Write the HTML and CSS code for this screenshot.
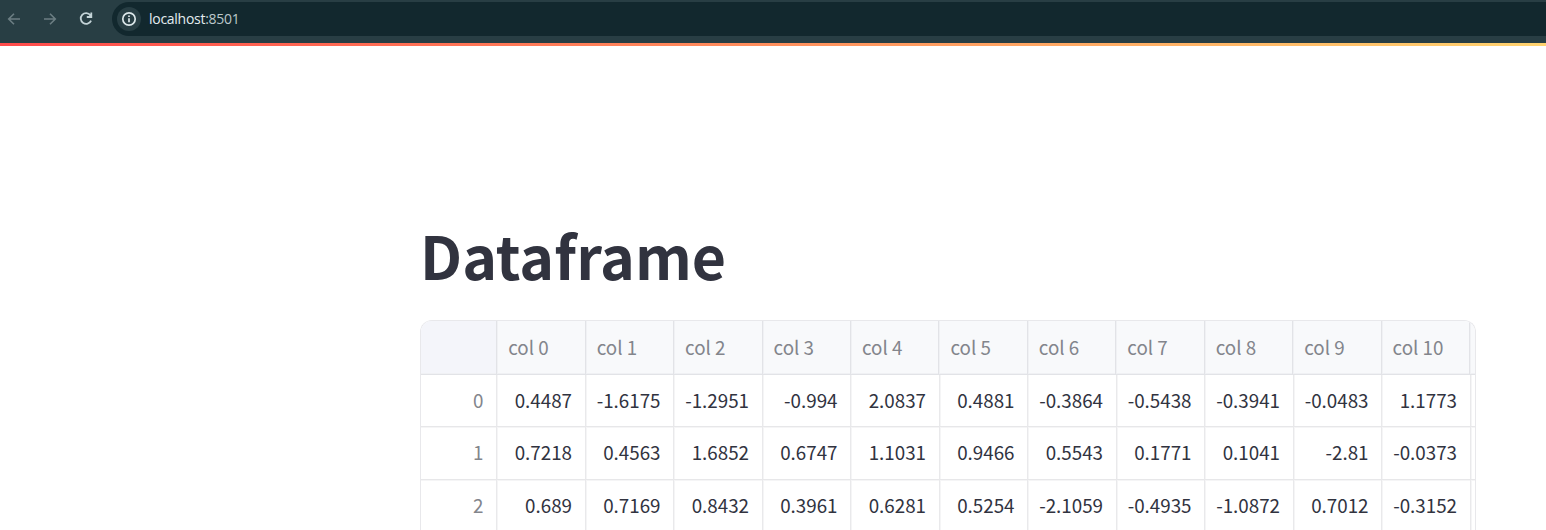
FILE: index.html
```
<!DOCTYPE html>
<html lang="en">
<head>
<meta charset="utf-8">
<title>Dataframe</title>
<link rel="stylesheet" href="styles.css">
</head>
<body>
<header class="toolbar">
  <svg class="nav-icon back" viewBox="0 0 16 16"><path d="M14 8H3M8 2.7L2.7 8L8 13.3"/></svg>
  <svg class="nav-icon forward" viewBox="0 0 16 16"><path d="M2 8H13M8 2.7L13.3 8L8 13.3"/></svg>
  <svg class="nav-icon reload" viewBox="0 0 16 16"><path d="M12.4 4.2A5.4 5.4 0 1 0 13.1 9.7M13.3 1.6V6H8.8"/><path class="tip" d="M13.3 2.6V6H9.9Z"/></svg>
  <div class="address">
    <span class="info"><svg viewBox="0 0 16 16"><circle cx="8" cy="8" r="6.2"/><path d="M8 7.3V11.3M8 4.6V6.1"/></svg></span>
    <span class="url">localhost<span class="port">:8501</span></span>
  </div>
</header>
<div class="decoration"></div>
<main class="page">
  <h1 class="title">Dataframe</h1>
  <div class="frame">
    <div class="row head"></div>
    <div class="row"></div>
    <div class="row"></div>
    <div class="row last"></div>
  </div>
</main>
<script src="table.js"></script>
</body>
</html>
```
FILE: styles.css
```
* { box-sizing: border-box; }
body {
  margin: 0;
  height: 530px;
  overflow: hidden;
  background: #fff;
  font-family: "Noto Sans CJK SC", sans-serif;
  color: #31333f;
}
.toolbar {
  display: flex;
  height: 43px;
  padding: 2px 0 7px 6px;
  background: #283e44;
}
.nav-icon {
  width: 16px;
  height: 16px;
  margin: 9px 20px 0 0;
  fill: none;
  stroke: #6c7e83;
  stroke-width: 1.6;
}
.reload { stroke: #c3d3d7; stroke-width: 1.8; margin-right: 18px; }
.tip { fill: #c3d3d7; stroke: none; }
.address {
  display: flex;
  align-items: center;
  flex: 1;
  height: 34px;
  padding-left: 5px;
  border-radius: 17px 0 0 17px;
  background: #12282e;
}
.info {
  display: flex;
  align-items: center;
  justify-content: center;
  width: 24px;
  height: 24px;
  margin-right: 8px;
  border-radius: 50%;
  background: #283e44;
}
.info svg { width: 16px; height: 16px; fill: none; stroke: #dce7ea; stroke-width: 1.7; }
.url {
  font: 14px/20px "Open Sans", sans-serif;
  letter-spacing: -0.28px;
  color: #e3edef;
}
.port { color: #bcc8cb; }
.decoration { height: 3px; background: linear-gradient(90deg, #ff4b4b, #ffd36f); }
.page { width: 1056px; margin-left: 420px; padding-top: 169px; }
.title {
  margin: 0;
  height: 80px;
  font-size: 59px;
  line-height: 80px;
  font-weight: 700;
}
.frame {
  height: 210px;
  margin-top: 25px;
  border: 1px solid #e8e8eb;
  border-bottom: 0;
  border-radius: 12px 12px 0 0;
  overflow: hidden;
}
.row {
  display: grid;
  grid-template-columns: 76px repeat(12, 88.5px);
  height: 52.5px;
  font-size: 18.8px;
  line-height: 49px;
}
.head {
  grid-template-columns: 76.2px repeat(12, 88.44px);
  height: 53.5px;
  background: #f8f9fb;
  color: #83858c;
  line-height: 51px;
}
.last { height: 50px; }
.cell {
  border-right: 1px solid #e9e9eb;
  border-bottom: 1px solid #e7e7e9;
  box-shadow: 1px 0 #f5f5f6, 0 1px #f5f5f6;
  padding-right: 12.5px;
  text-align: right;
  white-space: nowrap;
}
.head .cell {
  padding: 0 0 0 11px;
  text-align: left;
  border-color: #e2e3e7;
  box-shadow: 1px 0 #f0f1f4, inset 0 -1px #f0f1f4;
}
.index { color: #83858c; }
.head .index { background: #f4f5fa; }
.last .cell { border-bottom: 0; box-shadow: 1px 0 #f5f5f6; }
```
FILE: table.js
```
const rows = [
  ["", "col 0", "col 1", "col 2", "col 3", "col 4", "col 5", "col 6", "col 7", "col 8", "col 9", "col 10", ""],
  ["0", "0.4487", "-1.6175", "-1.2951", "-0.994", "2.0837", "0.4881", "-0.3864", "-0.5438", "-0.3941", "-0.0483", "1.1773", ""],
  ["1", "0.7218", "0.4563", "1.6852", "0.6747", "1.1031", "0.9466", "0.5543", "0.1771", "0.1041", "-2.81", "-0.0373", ""],
  ["2", "0.689", "0.7169", "0.8432", "0.3961", "0.6281", "0.5254", "-2.1059", "-0.4935", "-1.0872", "0.7012", "-0.3152", ""]
];
document.querySelectorAll(".row").forEach((row, r) => {
  rows[r].forEach((text, c) => {
    const cell = document.createElement("div");
    cell.className = c === 0 ? "cell index" : "cell";
    cell.textContent = text;
    row.append(cell);
  });
});
```
